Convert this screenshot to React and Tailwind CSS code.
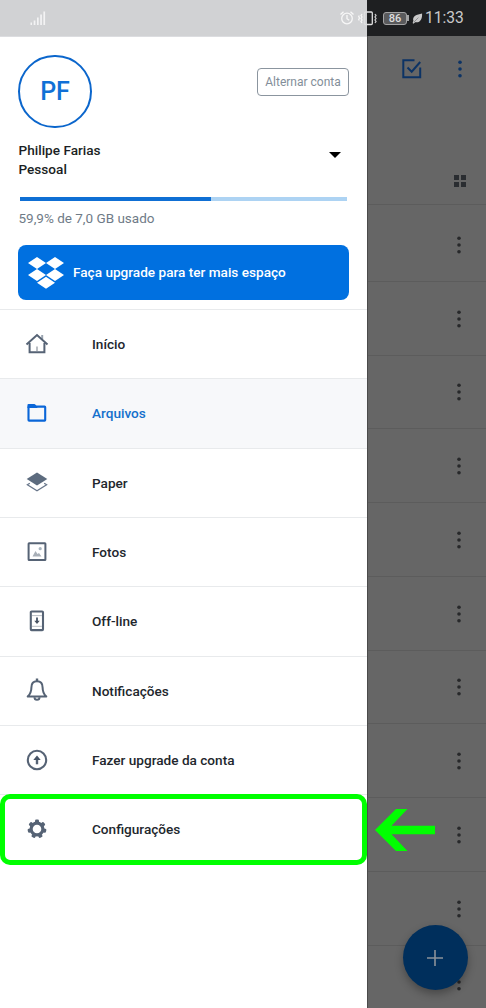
import React from "react";

const icon = "h-6 w-6 shrink-0 overflow-visible";

function HomeIcon() {
  return (
    <svg viewBox="0 0 24 24" className={icon} fill="none" stroke="#566375" strokeWidth="2">
      <path d="M17.2 3v4" stroke="#9aa4b0" />
      <path d="M1.5 12.6 12 3l10.5 9.600" />
      <path d="M4.600 11v9.200h14.800V11" />
      <path d="M12 14.500v4.500" stroke="#b9bdc2" />
    </svg>
  );
}
function FolderIcon() {
  return (
    <svg viewBox="0 0 24 24" className={icon} fill="none" stroke="#0a66d8" strokeWidth="2.100">
      <rect x="3.500" y="5.600" width="16.700" height="14" rx=".6" />
      <path d="M2.450 7V4.100Q2.450 3 3.550 3h5.700q.8 0 1.300.7L12.300 6v1z" fill="#0a66d8" stroke="none" />
    </svg>
  );
}
function PaperIcon() {
  return (
    <svg viewBox="0 0 24 24" className={icon}>
      <path d="M12 2.500 22.300 9 12 15.500 1.700 9z" fill="#5c6b7e" />
      <path d="M4.800 13.200 2.400 14.800 12 20.800l9.600-6-2.400-1.600" fill="none" stroke="#68768a" strokeWidth="1.300" />
    </svg>
  );
}
function PhotoIcon() {
  return (
    <svg viewBox="0 0 24 24" className={icon}>
      <rect x="3.600" y="3.200" width="16.800" height="16.800" rx=".5" fill="none" stroke="#566375" strokeWidth="2" />
      <path d="M7.500 16.500 10.500 11l2 3 1.500-1 2.500 3.500z" fill="#a9b0b8" />
      <circle cx="15.200" cy="8.700" r="1.600" fill="#a9b5bf" />
    </svg>
  );
}
function OfflineIcon() {
  return (
    <svg viewBox="0 0 24 24" className={icon} fill="none" stroke="#566375">
      <rect x="5.800" y="2.500" width="12.200" height="18.600" rx=".8" strokeWidth="2.100" />
      <path d="M7 6.600h10M7 17.300h10" stroke="#b9bec5" strokeWidth="1" />
      <path d="M12 8.500v4" strokeWidth="2" />
      <path d="M9.300 11.700h5.400L12 15z" fill="#465160" stroke="none" />
    </svg>
  );
}
function BellIcon() {
  return (
    <svg viewBox="0 0 24 24" className={icon} fill="none" stroke="#566375" strokeWidth="2">
      <path d="M12 .5V3" strokeWidth="2.400" />
      <path d="M12 3.200c-3.500 0-5.600 2.500-5.600 6.200 0 5-1.200 6.700-3.700 9.100h18.600c-2.500-2.400-3.700-4.100-3.700-9.100 0-3.700-2.100-6.200-5.600-6.200z" strokeLinejoin="round" />
      <path d="M9.500 19.200a2.500 2.500 0 0 0 5 0" />
    </svg>
  );
}
function UpgradeIcon() {
  return (
    <svg viewBox="0 0 24 24" className={icon} fill="none" stroke="#566375">
      <circle cx="12" cy="12" r="9.200" strokeWidth="2.100" />
      <path d="M12 11v5.300" strokeWidth="2.400" />
      <path d="M8.300 11.900 12 7.600l3.700 4.300z" fill="#465466" stroke="none" />
    </svg>
  );
}
function GearIcon() {
  return (
    <svg viewBox="0 0 24 24" className={icon} fill="#566375">
      <circle cx="12" cy="12" r="5.900" fill="none" stroke="#566375" strokeWidth="3.200" />
      {[0, 1, 2, 3, 4, 5, 6].map((n) => (
        <rect key={n} x="10" y="2.600" width="4" height="4.200" rx="1.200" transform={`rotate(${(n * 360) / 7} 12 12)`} />
      ))}
    </svg>
  );
}

const items = [
  ["Início", HomeIcon],
  ["Arquivos", FolderIcon],
  ["Paper", PaperIcon],
  ["Fotos", PhotoIcon],
  ["Off-line", OfflineIcon],
  ["Notificações", BellIcon],
  ["Fazer upgrade da conta", UpgradeIcon],
  ["Configurações", GearIcon],
];

function Dots({ className }) {
  return (
    <svg viewBox="0 0 6 20" className={className} fill="currentColor">
      <circle cx="3" cy="3.200" r="1.800" />
      <circle cx="3" cy="10" r="1.800" />
      <circle cx="3" cy="16.800" r="1.800" />
    </svg>
  );
}

function StatusBar() {
  return (
    <div className="absolute inset-x-0 top-0 flex h-9 items-center text-white">
      <svg viewBox="0 0 16 16" className="ml-[30px] h-4 w-4" fill="#f3f3f4">
        <path d="M.5 12.500h1.500V15H.500zM3.700 10.500h1.700V15H3.700zM7 7.500h1.700V15H7zM10.200 4.500h1.700V15h-1.700zM13.400 1.500h1.700V15h-1.700z" />
      </svg>
      <svg viewBox="0 0 16 16" className="ml-[293px] h-4 w-4 overflow-visible" fill="none" stroke="#f7f7f7" strokeWidth="1.300">
        <circle cx="8" cy="8.500" r="5.300" />
        <path d="M8 5v3.700l2.200 1.600M1.500 4.500 4.500 1.700M14.500 4.500l-3-2.800" />
      </svg>
      <svg viewBox="0 0 20 16" className="ml-[3px] h-4 w-5 overflow-visible" fill="none" strokeWidth="1.300">
        <rect x="6.500" y="2" width="7.800" height="12.500" rx="1" stroke="#dededf" />
        <path d="M4 4 3 5.500 4 7 3 8.500 4 10l-1 1.500L4 13M1.300 5.500l-.6 1 .8 1.500-.8 1.500.6 1" stroke="#f7f7f7" />
        <path d="m17 4 1 1.500L17 7l1 1.500-1 1.500 1 1.500-1 1.500" stroke="#c8c8c9" />
      </svg>
      <div className="ml-[5px] flex h-[13px] w-6 items-center justify-center rounded-[3px] border border-[#a3a3a4] bg-[#5a5a5c] text-[11px] leading-none font-medium text-[#dedede]">86</div>
      <div className="h-[6px] w-[2px] bg-[#a3a3a4]" />
      <svg viewBox="0 0 12 12" className="ml-[3px] h-[11px] w-[11px]">
        <path d="M1.500 8.500C0 3.500 5 1.500 11 .5c.3 6-2 10.500-7.500 9.500L1.500 11.800.700 11z" fill="#c9c9ca" />
        <path d="M2 10 7 5" stroke="#606164" strokeWidth=".6" />
      </svg>
      <span className="mt-[2px] ml-[2px] text-[15.6px] leading-none text-[#cacacb]">11:33</span>
    </div>
  );
}

export default function App() {
  return (
    <div className="relative flex h-[1008px] w-[486px] overflow-hidden bg-white font-[Roboto,sans-serif]">
      <aside className="h-full w-[367px] shrink-0 bg-white">
        <div className="box-content h-9 border-b border-[#dcdde0] bg-[#d1d2d4]" />
        <div className="flex h-[272px] flex-col pr-[18px] pl-[18px]">
          <div className="mt-[18px] flex items-start justify-between">
            <div className="flex h-[73px] w-[74px] items-center justify-center rounded-full border-2 border-[#0b66cc] text-[25px] leading-none font-medium text-[#1070d6]">PF</div>
            <div className="mt-[13px] flex h-7 w-[92px] items-center justify-center rounded-[4px] border border-[#8b959f] text-[12px] text-[#838e99]">Alternar conta</div>
          </div>
          <div className="mt-[13px] flex justify-between">
            <div className="ml-[0.500px] text-[13.6px] leading-[18.5px] font-medium text-[#1b1f24]">
              <div>Philipe Farias</div>
              <div>Pessoal</div>
            </div>
            <svg viewBox="0 0 12 6" className="mt-[11px] mr-2 h-[6px] w-3"><path d="M0 0h12L6 6z" fill="#000" /></svg>
          </div>
          <div className="mt-[19px] mr-[2px] ml-[2px] flex h-1 bg-[#add3f3]">
            <div className="w-[191px] bg-[#0f6fd4]" />
          </div>
          <div className="mt-[7px] ml-[0.500px] text-[13.5px] leading-5 text-[#6f7b87]">59,9% de 7,0 GB usado</div>
          <div className="mt-[17px] flex h-[55px] w-[331px] items-center rounded-lg bg-[#0070e0] pl-[10px] text-[13.6px] font-medium text-white">
            <svg viewBox="0 0 36 32" className="h-8 w-9" fill="#fff">
              <path d="M9 0l9 6-9 6-9-6zM27 0l9 6-9 6-9-6zM9 12l9 6-9 6-9-6zM27 12l9 6-9 6-9-6zM18 19.800l9 6-9 6-9-6z" />
            </svg>
            <span className="ml-[9px]">Faça upgrade para ter mais espaço</span>
          </div>
        </div>
        <nav>
          {items.map(([label, Icon], i) => (
            <div
              key={label}
              className={
                "flex h-[69.330px] items-center border-t border-[#e8eaec] pl-[25px] text-[13.6px] font-medium " +
                (i === 1 ? "bg-[#f7f8fa] text-[#1470cc]" : "text-[#22272d]")
              }
            >
              <div className="-mt-px"><Icon /></div>
              <span className="ml-[43px]">{label}</span>
            </div>
          ))}
        </nav>
      </aside>

      <main className="flex h-full flex-1 flex-col border-l border-[#4b4b4b] bg-[#666]">
        <div className="-ml-px h-9 shrink-0 bg-[#1e1f21]" />
        <div className="flex h-[64px] shrink-0 items-center pt-px pl-[34px]">
          <svg viewBox="0 0 20 20" className="h-5 w-5 overflow-visible" fill="none" stroke="#0c3365" strokeWidth="2">
            <path d="M12.500 1.300H1.300v16.900h16.900V8.500M5.500 8.500l4.200 4.200L18.200 3" />
          </svg>
          <Dots className="ml-[35px] h-[20px] w-[6px] text-[#0c3365]" />
        </div>
        <div className="flex h-[104px] shrink-0 items-end pb-[17px] pl-[86px]">
          <div className="grid grid-cols-2 gap-[2px]">
            {[0, 1, 2, 3].map((n) => <div key={n} className="h-[5px] w-[5px] bg-[#2a2d31]" />)}
          </div>
        </div>
        <div className="h-[4px] shrink-0 border-t border-[#5c5c5c]" />
        {Array.from({ length: 11 }, (_, i) => (
          <div key={i} className="flex h-[73.750px] shrink-0 items-center border-b border-[#5c5c5c] pt-px pl-[88px]">
            <Dots className="h-5 w-[6px] text-[#27282a]" />
          </div>
        ))}
      </main>

      <StatusBar />

      <div className="absolute top-[794px] left-0 h-[71px] w-[367px] rounded-[10px] border-5 border-[#00ff00]" />
      <svg viewBox="0 0 60 42" className="absolute top-[809px] left-[375px] h-[42px] w-[60px]" fill="#00ff00">
        <path d="M0 21 21 0h11.500L16.500 16.700H60v8.600H16.500L32.500 42H21z" />
      </svg>
      <div className="absolute top-[925px] left-[403px] flex h-[65px] w-[65px] items-center justify-center rounded-full bg-[#002f5c] shadow-[0_4px_8px_rgba(0,0,0,0.3)]">
        <svg viewBox="0 0 16 16" className="mr-px h-4 w-4" stroke="#8b9299" strokeWidth="1.600"><path d="M8 0v16M0 8h16" /></svg>
      </div>
    </div>
  );
}
